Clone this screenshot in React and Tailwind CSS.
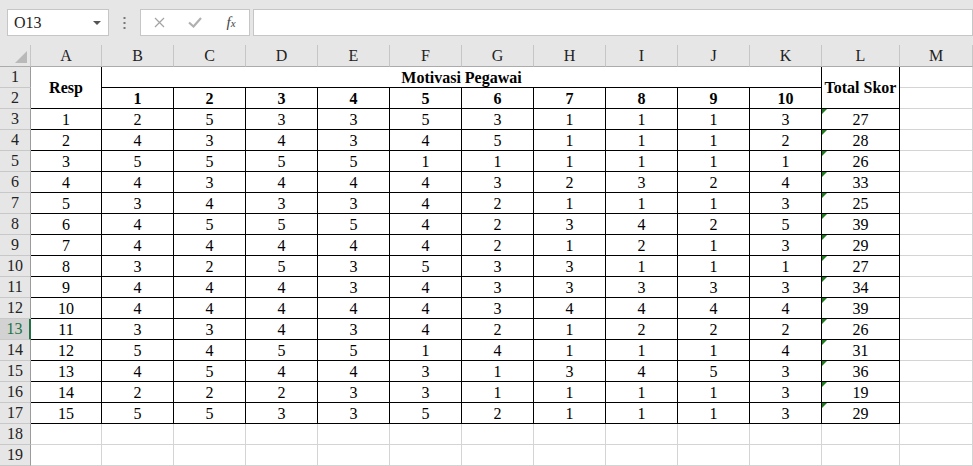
import React from 'react';

const COLS = ['A', 'B', 'C', 'D', 'E', 'F', 'G', 'H', 'I', 'J', 'K', 'L', 'M'];

const DATA = [
	[2, 5, 3, 3, 5, 3, 1, 1, 1, 3, 27],
	[4, 3, 4, 3, 4, 5, 1, 1, 1, 2, 28],
	[5, 5, 5, 5, 1, 1, 1, 1, 1, 1, 26],
	[4, 3, 4, 4, 4, 3, 2, 3, 2, 4, 33],
	[3, 4, 3, 3, 4, 2, 1, 1, 1, 3, 25],
	[4, 5, 5, 5, 4, 2, 3, 4, 2, 5, 39],
	[4, 4, 4, 4, 4, 2, 1, 2, 1, 3, 29],
	[3, 2, 5, 3, 5, 3, 3, 1, 1, 1, 27],
	[4, 4, 4, 3, 4, 3, 3, 3, 3, 3, 34],
	[4, 4, 4, 4, 4, 3, 4, 4, 4, 4, 39],
	[3, 3, 4, 3, 4, 2, 1, 2, 2, 2, 26],
	[5, 4, 5, 5, 1, 4, 1, 1, 1, 4, 31],
	[4, 5, 4, 4, 3, 1, 3, 4, 5, 3, 36],
	[2, 2, 2, 3, 3, 1, 1, 1, 1, 3, 19],
	[5, 5, 3, 3, 5, 2, 1, 1, 1, 3, 29],
];

const SELECTED_ROW = 13;

// plain cell, excel gridline
const gridCell = 'border-r border-b border-[#d4d4d4]';
// cell inside the bordered table
const boxCell = 'flex items-end justify-center border-r border-b border-black leading-[18px]';

function RowHead({ n }) {
	const selected = n === SELECTED_ROW;
	return (
		<div
			className={
				selected
					? 'flex items-center justify-center border-b border-b-[#c8c8c8] border-r-2 border-r-[#217346] bg-[#d2d2d2] text-[#217346]'
					: 'flex items-center justify-center border-r border-b border-r-[#9b9b9b] border-b-[#c8c8c8] bg-[#e6e6e6] text-[#222]'
			}
		>
			{n}
		</div>
	);
}

function Toolbar() {
	return (
		<div className="flex h-[45px] items-start bg-[#e6e6e6] pl-[7px] pt-[9px]">
			<div className="flex h-[27px] w-[102px] items-center justify-between border border-[#c6c6c6] bg-white pl-[6px] pr-[7px]">
				<span className="leading-none text-[#222]">O13</span>
				<svg width="8" height="4" viewBox="0 0 8 4">
					<path d="M0 0h8L4 4z" fill="#555" />
				</svg>
			</div>
			<div className="flex h-[27px] w-[31px] items-center justify-center">
				<svg width="3" height="12" viewBox="0 0 3 12">
					<rect x="0.5" y="0" width="2" height="2" fill="#777" />
					<rect x="0.5" y="5" width="2" height="2" fill="#777" />
					<rect x="0.5" y="10" width="2" height="2" fill="#777" />
				</svg>
			</div>
			<div className="flex h-[27px] w-[110px] items-center border border-[#c6c6c6] bg-white">
				<div className="flex w-[36px] justify-center">
					<svg width="11" height="11" viewBox="0 0 11 11">
						<path d="M1 1l9 9M10 1l-9 9" stroke="#a3a3a3" strokeWidth="1.2" />
					</svg>
				</div>
				<div className="flex w-[36px] justify-center">
					<svg width="14" height="11" viewBox="0 0 14 11">
						<path d="M1 5.5l4.5 4 7.5-8.5" stroke="#b0b0b0" strokeWidth="2.2" fill="none" />
					</svg>
				</div>
				<div className="flex w-[36px] justify-center">
					<span className="text-[15px] italic leading-none text-[#444]">
						f<span className="text-[11px]">x</span>
					</span>
				</div>
			</div>
			<div className="ml-[3px] h-[27px] flex-1 border border-[#c6c6c6] bg-white" />
		</div>
	);
}

export default function App() {
	return (
		<div className="h-[466px] w-[973px] overflow-hidden bg-white font-['Liberation_Serif',serif] text-[16px] text-black">
			<Toolbar />

			<div className="grid grid-cols-[31px_71px_repeat(10,72px)_78px_1fr] grid-rows-[22px_repeat(19,21px)]">
				{/* column headers */}
				<div className="flex items-end justify-end border-r border-b border-r-[#c6c6c6] border-b-[#ababab] bg-[#e6e6e6] pb-[3px] pr-[3px]">
					<svg width="12" height="12" viewBox="0 0 12 12">
						<polygon points="12,0 12,12 0,12" fill="#b9b9b9" />
					</svg>
				</div>
				{COLS.map((c) => (
					<div
						key={c}
						className="flex items-center justify-center border-r border-b border-r-[#c6c6c6] border-b-[#ababab] bg-[#e6e6e6] text-[#222]"
					>
						{c}
					</div>
				))}

				{/* row 1 */}
				<RowHead n={1} />
				<div className="row-span-2 flex items-center justify-center border-r border-b border-black font-bold">
					Resp
				</div>
				<div className={`col-span-10 font-bold ${boxCell}`}>Motivasi Pegawai</div>
				<div className="row-span-2 flex items-center justify-center border-r border-b border-black font-bold">
					Total Skor
				</div>
				<div className={gridCell} />

				{/* row 2 */}
				<RowHead n={2} />
				{Array.from({ length: 10 }, (_, i) => (
					<div key={i} className={`font-bold ${boxCell}`}>
						{i + 1}
					</div>
				))}
				<div className={gridCell} />

				{/* data rows */}
				{DATA.map((row, r) => (
					<React.Fragment key={r}>
						<RowHead n={r + 3} />
						<div className={boxCell}>{r + 1}</div>
						{row.slice(0, 10).map((v, i) => (
							<div key={i} className={boxCell}>
								{v}
							</div>
						))}
						<div className={`relative ${boxCell}`}>
							<span className="absolute left-0 top-0 h-0 w-0 border-r-[5px] border-t-[5px] border-r-transparent border-t-[#1e7b1e]" />
							{row[10]}
						</div>
						<div className={gridCell} />
					</React.Fragment>
				))}

				{/* empty rows */}
				{[18, 19].map((n) => (
					<React.Fragment key={n}>
						<RowHead n={n} />
						{COLS.map((c) => (
							<div key={c} className={gridCell} />
						))}
					</React.Fragment>
				))}
			</div>
		</div>
	);
}
